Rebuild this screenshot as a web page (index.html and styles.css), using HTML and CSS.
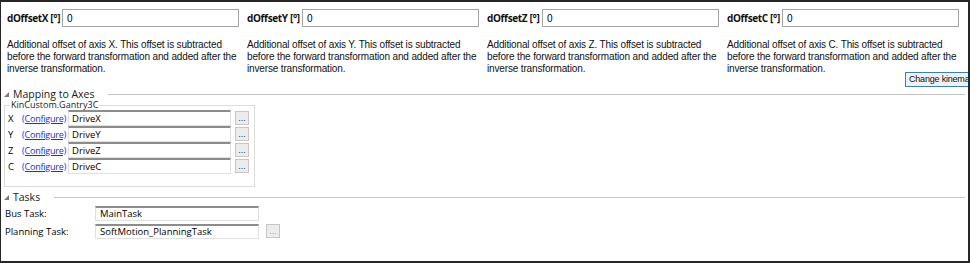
FILE: index.html
```html
<!DOCTYPE html>
<html lang="en">
<head>
    <meta charset="UTF-8">
    <title>Kinematics</title>
    <link rel="stylesheet" href="styles.css">
</head>
<body>
    <div class="panel">
        <div class="offsets">
            <div class="offset">
                <div class="offset-head"><label>dOffsetX [°]</label><input class="field" value="0"></div>
                <p class="desc">Additional offset of axis X. This offset is subtracted before the forward transformation and added after the inverse transformation.</p>
            </div>
            <div class="offset">
                <div class="offset-head"><label>dOffsetY [°]</label><input class="field" value="0"></div>
                <p class="desc">Additional offset of axis Y. This offset is subtracted before the forward transformation and added after the inverse transformation.</p>
            </div>
            <div class="offset">
                <div class="offset-head"><label>dOffsetZ [°]</label><input class="field" value="0"></div>
                <p class="desc">Additional offset of axis Z. This offset is subtracted before the forward transformation and added after the inverse transformation.</p>
            </div>
            <div class="offset">
                <div class="offset-head"><label>dOffsetC [°]</label><input class="field" value="0"></div>
                <p class="desc">Additional offset of axis C. This offset is subtracted before the forward transformation and added after the inverse transformation.</p>
            </div>
        </div>
        <div class="kin-bar"><button class="kin-btn">Change kinematic</button></div>

        <div class="section-head"><span class="tri"></span>Mapping to Axes<span class="rule"></span></div>
        <fieldset class="axes">
            <legend>KinCustom.Gantry3C</legend>
            <div class="axis-row"><span class="axis">X</span><a href="#">(Configure)</a><input class="drive" value="DriveX"><button class="dots">...</button></div>
            <div class="axis-row"><span class="axis">Y</span><a href="#">(Configure)</a><input class="drive" value="DriveY"><button class="dots">...</button></div>
            <div class="axis-row"><span class="axis">Z</span><a href="#">(Configure)</a><input class="drive" value="DriveZ"><button class="dots">...</button></div>
            <div class="axis-row"><span class="axis">C</span><a href="#">(Configure)</a><input class="drive" value="DriveC"><button class="dots">...</button></div>
        </fieldset>

        <div class="section-head tasks-head"><span class="tri"></span>Tasks<span class="rule"></span></div>
        <div class="task-row"><span class="task-label">Bus Task:</span><input class="task" value="MainTask"></div>
        <div class="task-row"><span class="task-label">Planning Task:</span><input class="task" value="SoftMotion_PlanningTask"><button class="dots off">...</button></div>
    </div>
</body>
</html>
```

FILE: styles.css
```css
body {
    margin: 0;
    background-color: #fff;
    font-family: "Liberation Sans", Arial, sans-serif;
    color: #000;
}

.panel {
    width: 967px;
    height: 259px;
    border: 2px solid #262626;
    border-left-width: 1px;
    background-color: #fff;
    overflow: hidden;
}

.offsets {
    display: flex;
    padding: 7px 0 0 6px;
}

.offset {
    width: 240px;
    flex-shrink: 0;
}

.offset-head {
    display: flex;
    align-items: center;
}

.offset-head label {
    width: 55px;
    font-family: "Open Sans", sans-serif;
    font-weight: bold;
    font-size: 10px;
    letter-spacing: -0.35px;
    color: #111;
}

.field {
    width: 177px;
    height: 18px;
    box-sizing: border-box;
    border: 1px solid #a5a5a5;
    padding: 0 4px;
    font-family: "Liberation Sans", sans-serif;
    font-size: 10px;
    outline: none;
}

.desc {
    margin: 12px 0 0 0;
    width: 238px;
    font-size: 10px;
    letter-spacing: -0.15px;
    line-height: 12px;
    color: #111;
}

.kin-bar {
    display: flex;
    padding-left: 904px;
    margin-top: -3px;
}

.kin-btn {
    flex-shrink: 0;
    white-space: nowrap;
    height: 15px;
    padding: 0 3px;
    border: 1px solid #3c7fb1;
    background-color: #eef2f6;
    font-family: "Liberation Sans", sans-serif;
    font-size: 9px;
    letter-spacing: -0.2px;
    line-height: 13px;
    color: #111;
}

.section-head {
    display: flex;
    align-items: center;
    padding-left: 3px;
    font-family: "Open Sans", sans-serif;
    font-size: 10.5px;
    height: 13px;
    color: #1a1a1a;
}

.tri {
    width: 0;
    height: 0;
    border-left: 5px solid transparent;
    border-bottom: 5px solid #7a7a7a;
    margin: 2px 4px 0 0;
}

.rule {
    flex: 1;
    height: 1px;
    background-color: #c4c4c4;
    margin: 1px 3px 0 14px;
}

.axes {
    width: 251px;
    height: 87px;
    box-sizing: border-box;
    margin: 0 0 0 3px;
    padding: 0 0 0 3px;
    border: 1px solid #dcdcdc;
}

.axes legend {
    padding: 0 1px;
    margin-left: 2px;
    font-family: "Open Sans", sans-serif;
    font-size: 9px;
    line-height: 10px;
    color: #222;
}

.axis-row {
    display: grid;
    grid-template-columns: 14px 46px 163px 18px;
    align-items: center;
    height: 16px;
    font-family: "Open Sans", sans-serif;
    font-size: 9.5px;
}

.axis-row a {
    font-size: 9px;
    letter-spacing: -0.2px;
    white-space: nowrap;
    color: #2a2ad6;
}

.drive {
    width: 163px;
    height: 16px;
    box-sizing: border-box;
    border: 1px solid #e0e0e0;
    border-top: 2px solid #8c8c8c;
    padding: 0 3px;
    font-family: "Open Sans", sans-serif;
    font-size: 9.5px;
    outline: none;
}

.dots {
    width: 14px;
    height: 14px;
    margin-left: 4px;
    padding: 0;
    border: 1px solid #c6c6c6;
    background-color: #ececec;
    font-size: 9px;
    line-height: 8px;
    color: #333;
}

.dots.off {
    margin-left: 7px;
    color: #999;
}

.tasks-head {
    margin-top: 3px;
}

.section-head + .task-row {
    margin-top: 1px;
}

.task-row {
    display: flex;
    align-items: center;
    height: 18px;
    padding-left: 4px;
    font-family: "Open Sans", sans-serif;
    font-size: 9.5px;
}

.task-label {
    width: 90px;
}

.task {
    width: 164px;
    height: 15px;
    box-sizing: border-box;
    border: 1px solid #e0e0e0;
    border-top: 2px solid #8c8c8c;
    padding: 0 4px;
    font-family: "Open Sans", sans-serif;
    font-size: 9.5px;
    outline: none;
}
```
